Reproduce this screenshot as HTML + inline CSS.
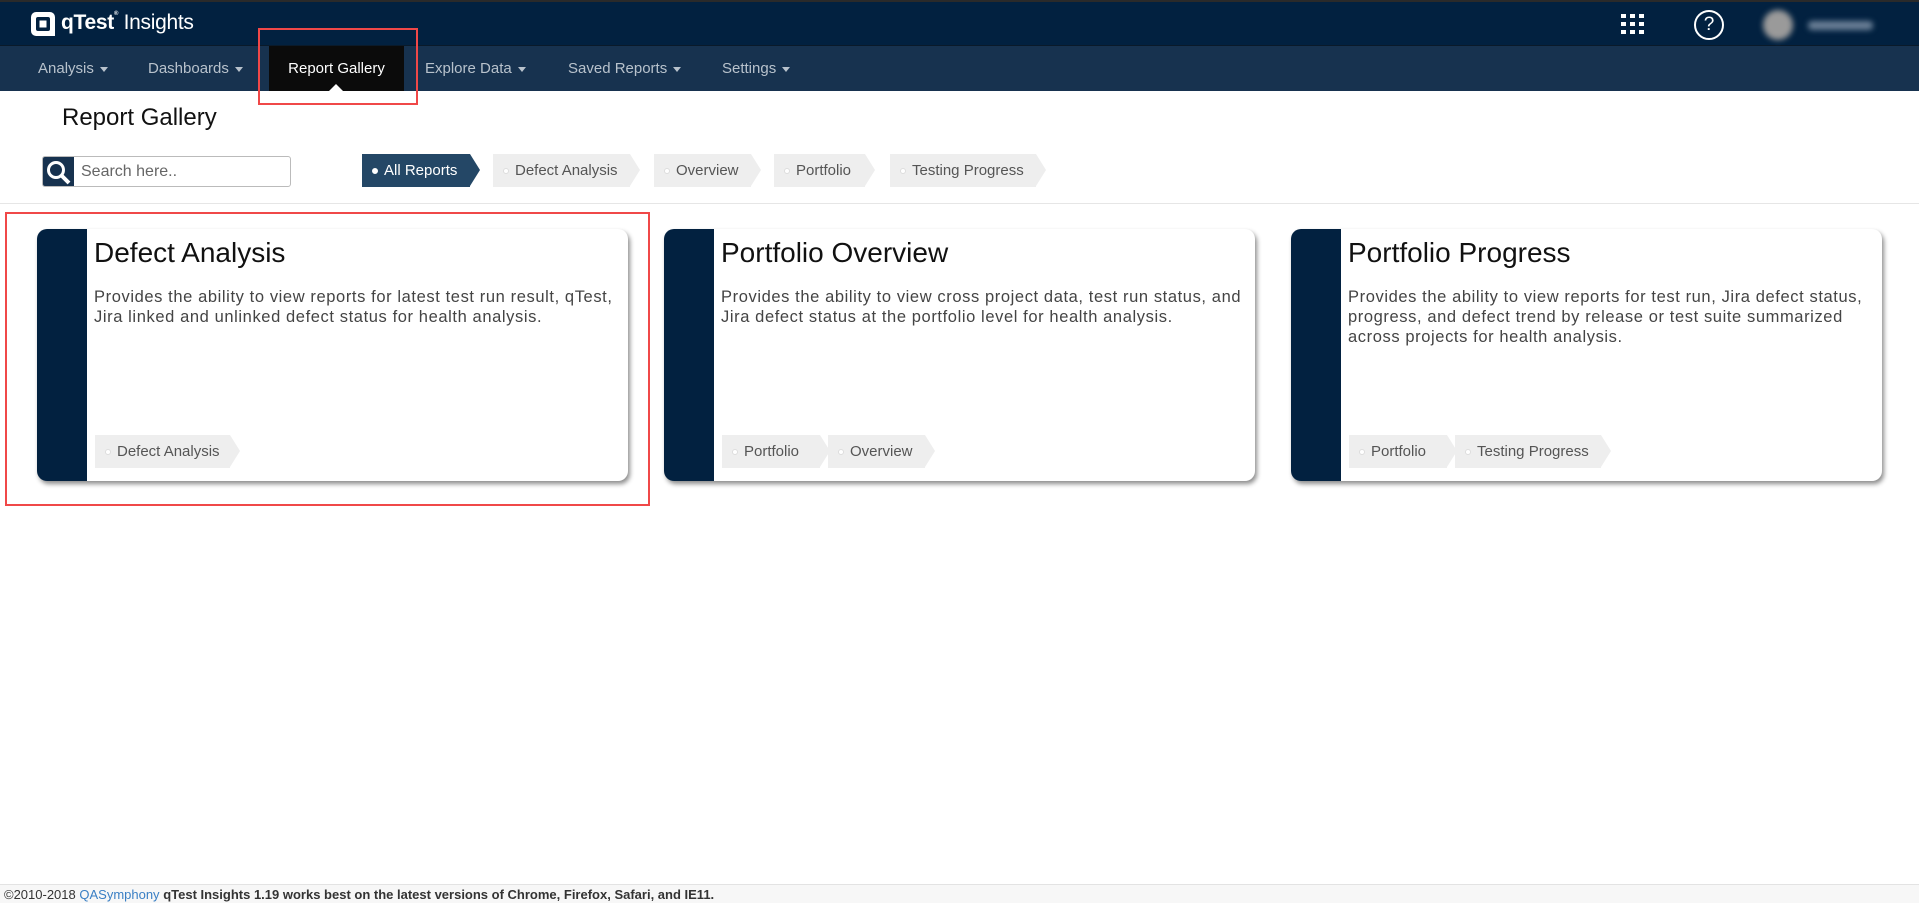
<!DOCTYPE html>
<html><head><meta charset="utf-8"><style>
*{box-sizing:border-box;margin:0;padding:0}
body{width:1919px;height:903px;overflow:hidden;background:#fff;font-family:"Liberation Sans",sans-serif;position:relative;color:#333}
.top{position:absolute;left:0;top:0;width:1919px;height:46px;background:#022140;border-top:2px solid #2a2a2a;border-bottom:1px solid #0a1a2a}
.nav{position:absolute;left:0;top:46px;width:1919px;height:45px;background:#17324f}
.ni{position:absolute;top:0;height:45px;line-height:45px;color:#b8c2cc;font-size:15px}
.ni .c{display:inline-block;width:0;height:0;border-left:4px solid transparent;border-right:4px solid transparent;border-top:5px solid #b8c2cc;margin-left:6px;vertical-align:middle}
.act{position:absolute;left:269px;top:46px;width:135px;height:45px;background:#0b0b0b;color:#fff;font-size:15px;line-height:45px;text-align:center}
.act:after{content:"";position:absolute;left:60px;bottom:0;border-left:7px solid transparent;border-right:7px solid transparent;border-bottom:7px solid #fff}
.red{position:absolute;border:2px solid #f04848}
h1{position:absolute;left:62px;top:104px;font-size:24px;font-weight:normal;color:#111}
.search{position:absolute;left:42px;top:156px;width:249px;height:31px;border:1px solid #bbb;border-radius:3px;overflow:hidden}
.search .ic{position:absolute;left:0;top:0;width:31px;height:31px;background:#17324f}
.search span{position:absolute;left:38px;top:6px;font-size:16px;color:#666}
.chip{position:absolute;height:33px;line-height:33px;background:#eee;color:#555;font-size:15px;padding-left:10px}
.chip:after{content:"";position:absolute;right:-10px;top:0;border-top:16.5px solid transparent;border-bottom:16.5px solid transparent;border-left:10px solid #eee}
.chip .d{display:inline-block;width:6px;height:6px;border-radius:50%;background:#fff;border:1px solid #ddd;margin-right:6px;vertical-align:middle}
.chip.a{background:#244766;color:#fff}.chip.a:after{border-left-color:#244766}
.chip.a .d{background:#fff;border-color:#fff}
.hr{position:absolute;left:0;top:203px;width:1919px;height:1px;background:#e6e6e6}
.card{position:absolute;top:229px;width:591px;height:252px;background:#fff;border-radius:10px;box-shadow:2px 3px 5px rgba(0,0,0,.45);overflow:hidden}
.card .s{position:absolute;left:0;top:0;width:50px;height:100%;background:#022140}
.card h2{position:absolute;left:57px;top:8px;font-size:28px;font-weight:normal;color:#111}
.card p{position:absolute;left:57px;top:58px;width:530px;white-space:nowrap;font-size:16.5px;letter-spacing:.6px;line-height:20px;color:#444}
.card .chip{top:206px;font-size:15px}
.foot{position:absolute;left:0;top:884px;width:1919px;height:19px;border-top:1px solid #e3e3e3;background:#f7f7f7;font-size:13px;line-height:19px;padding-left:4px;color:#333}
</style></head><body>
<div class="top">
 <svg style="position:absolute;left:30px;top:9px" width="26" height="26" viewBox="0 0 26 26"><rect x="1" y="1" width="24" height="24" rx="5" fill="#fff"/><rect x="6" y="6" width="14" height="14" rx="2" fill="#022140"/><rect x="9.5" y="9.5" width="7" height="7" fill="#fff"/><rect x="14" y="20" width="11" height="5" fill="#fff"/></svg>
 <div style="position:absolute;left:61px;top:9px;color:#fff;font-size:21px;font-weight:bold;letter-spacing:-.3px">qTest<span style="font-size:6px;vertical-align:top">®</span> <span style="font-weight:normal">Insights</span></div>
 <svg style="position:absolute;left:1621px;top:12px" width="24" height="22" viewBox="0 0 24 22" fill="#fff"><rect x="0" y="0" width="5" height="4"/><rect x="9" y="0" width="5" height="4"/><rect x="18" y="0" width="5" height="4"/><rect x="0" y="8" width="5" height="4"/><rect x="9" y="8" width="5" height="4"/><rect x="18" y="8" width="5" height="4"/><rect x="0" y="16" width="5" height="4"/><rect x="9" y="16" width="5" height="4"/><rect x="18" y="16" width="5" height="4"/></svg>
 <div style="position:absolute;left:1694px;top:8px;width:30px;height:30px;border:2px solid #fff;border-radius:50%;color:#fff;font-size:19px;text-align:center;line-height:26px">?</div>
 <div style="position:absolute;left:1763px;top:8px;width:30px;height:30px;border-radius:50%;background:#9a9a9a;filter:blur(3px)"></div>
 <div style="position:absolute;left:1808px;top:19px;width:65px;height:9px;border-radius:4px;background:#6a7f96;filter:blur(3px)"></div>
</div>
<div class="nav">
 <div class="ni" style="left:38px">Analysis<span class="c"></span></div>
 <div class="ni" style="left:148px">Dashboards<span class="c"></span></div>
 <div class="ni" style="left:425px">Explore Data<span class="c"></span></div>
 <div class="ni" style="left:568px">Saved Reports<span class="c"></span></div>
 <div class="ni" style="left:722px">Settings<span class="c"></span></div>
</div>
<div class="act">Report Gallery</div>
<div class="red" style="left:258px;top:28px;width:160px;height:77px"></div>
<h1>Report Gallery</h1>
<div class="search"><div class="ic"><svg width="31" height="31" viewBox="0 0 31 31"><circle cx="13" cy="13" r="7.5" fill="none" stroke="#fff" stroke-width="3"/><line x1="18.5" y1="18.5" x2="26" y2="26" stroke="#fff" stroke-width="4"/></svg></div><span>Search here..</span></div>
<div class="chip a" style="left:362px;top:154px;width:108px"><span class="d"></span>All Reports</div>
<div class="chip" style="left:493px;top:154px;width:137px"><span class="d"></span>Defect Analysis</div>
<div class="chip" style="left:654px;top:154px;width:97px"><span class="d"></span>Overview</div>
<div class="chip" style="left:774px;top:154px;width:91px"><span class="d"></span>Portfolio</div>
<div class="chip" style="left:890px;top:154px;width:146px"><span class="d"></span>Testing Progress</div>
<div class="hr"></div>
<div class="card" style="left:37px"><div class="s"></div><h2>Defect Analysis</h2><p>Provides the ability to view reports for latest test run result, qTest,<br>Jira linked and unlinked defect status for health analysis.</p><div class="chip" style="left:58px;width:135px"><span class="d"></span>Defect Analysis</div></div>
<div class="card" style="left:664px"><div class="s"></div><h2>Portfolio Overview</h2><p>Provides the ability to view cross project data, test run status, and<br>Jira defect status at the portfolio level for health analysis.</p><div class="chip" style="left:58px;width:98px"><span class="d"></span>Portfolio</div><div class="chip" style="left:164px;width:97px"><span class="d"></span>Overview</div></div>
<div class="card" style="left:1291px"><div class="s"></div><h2>Portfolio Progress</h2><p>Provides the ability to view reports for test run, Jira defect status,<br>progress, and defect trend by release or test suite summarized<br>across projects for health analysis.</p><div class="chip" style="left:58px;width:98px"><span class="d"></span>Portfolio</div><div class="chip" style="left:164px;width:146px"><span class="d"></span>Testing Progress</div></div>
<div class="red" style="left:5px;top:212px;width:645px;height:294px"></div>
<div class="foot">©2010-2018 <span style="color:#3a7fc4">QASymphony</span> <b>qTest Insights 1.19 works best on the latest versions of Chrome, Firefox, Safari, and IE11.</b></div>
</body></html>
